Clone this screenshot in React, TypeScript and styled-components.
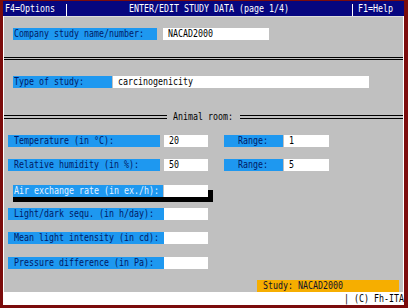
import { createGlobalStyle, styled } from 'styled-components';

const GlobalStyle = createGlobalStyle`
  html, body {
    margin: 0;
    padding: 0;
    background: #7b0c0c;
  }
  body {
    font-family: "DejaVu Sans Mono", "Liberation Mono", monospace;
    font-size: 11px;
  }
`;

// the screen font is a narrow 5px-per-cell terminal font
const CELL_SHRINK = 6.622 - 5;

const Mono = ({ children }: { children: string }) => (
  <SMono $len={children.length}>{children}</SMono>
);

const LabelField = ({
  label,
  value = '',
  labelW,
  inputW,
  gap = 0,
  pad = 6,
}: {
  label: string;
  value?: string;
  labelW: number;
  inputW: number;
  gap?: number;
  pad?: number;
}) => (
  <>
    <SLabel $w={labelW} $pl={pad}>
      <Mono>{label}</Mono>
    </SLabel>
    <SInput $w={inputW} $ml={gap}>
      <Mono>{value}</Mono>
    </SInput>
  </>
);

const RangeField = ({ value }: { value: string }) => (
  <>
    <SLabel $w={59} $ml={16} $center>
      <Mono>Range:</Mono>
    </SLabel>
    <SInput $w={45} $ml={1}>
      <Mono>{value}</Mono>
    </SInput>
  </>
);

const App = () => {
  return (
    <SScreen>
      <GlobalStyle />
      <SInner>
        <STitleBar>
          <STitleCell $w={63} $pl={2}>
            <Mono>F4=Options</Mono>
          </STitleCell>
          <STitleSep />
          <STitleCell $grow $center>
            <Mono>ENTER/EDIT STUDY DATA (page 1/4)</Mono>
          </STitleCell>
          <STitleSep />
          <STitleCell $w={51} $pl={5}>
            <Mono>F1=Help</Mono>
          </STitleCell>
        </STitleBar>

        <SPanel>
          <SRow $mt={11} $pl={9}>
            <LabelField label="Company study name/number:" value="NACAD2000" labelW={144} inputW={106} gap={6} pad={1} />
          </SRow>

          <SDoubleRule $gap={1} $mt={17} />

          <SRow $mt={16} $pl={9}>
            <LabelField label="Type of study:" value="carcinogenicity" labelW={99} inputW={256} gap={1} pad={1} />
          </SRow>

          <SHeading $mt={23}>
            <SDoubleRule $gap={2} $grow />
            <SHeadingText>
              <Mono>Animal room:</Mono>
            </SHeadingText>
            <SDoubleRule $gap={2} $grow />
          </SHeading>

          <SRow $mt={12} $pl={4}>
            <LabelField label="Temperature (in °C):" value="20" labelW={152} inputW={44} gap={4} />
            <RangeField value="1" />
          </SRow>

          <SRow $mt={12} $pl={4}>
            <LabelField label="Relative humidity (in %):" value="50" labelW={152} inputW={44} gap={4} />
            <RangeField value="5" />
          </SRow>

          <SRow $mt={14} $pl={4}>
            <SFocusGroup>
              <SLabel $w={150} $pl={1} $ml={5} $focus>
                <Mono>Air exchange rate (in ex./h):</Mono>
              </SLabel>
              <SInput $w={44} $ml={1} />
            </SFocusGroup>
          </SRow>

          <SRow $mt={11} $pl={4}>
            <LabelField label="Light/dark sequ. (in h/day):" labelW={156} inputW={44} />
          </SRow>

          <SRow $mt={12} $pl={4}>
            <LabelField label="Mean light intensity (in cd):" labelW={156} inputW={44} />
          </SRow>

          <SRow $mt={13} $pl={4}>
            <LabelField label="Pressure difference (in Pa):" labelW={156} inputW={44} />
          </SRow>

          <SStudyBar>
            <Mono>Study: NACAD2000</Mono>
          </SStudyBar>
        </SPanel>

        <SStatus>
          <Mono>| (C) Fh-ITA</Mono>
        </SStatus>
      </SInner>
    </SScreen>
  );
};

const SMono = styled.span<{ $len: number }>`
  display: inline-block;
  white-space: pre;
  transform: scaleX(0.755);
  transform-origin: left center;
  margin-right: ${props => -props.$len * CELL_SHRINK}px;
`;

const SScreen = styled.div`
  width: 408px;
  height: 308px;
  box-sizing: border-box;
  padding: 1px 4px 3px 3px;
  background: #7b0c0c;
  display: flex;
  flex-direction: column;
`;

const SInner = styled.div`
  flex: 1;
  display: flex;
  flex-direction: column;
  background: #ffffff;
`;

const STitleBar = styled.div`
  height: 15px;
  flex-shrink: 0;
  display: flex;
  background: #06067f;
  color: #ffffff;
  line-height: 15px;
`;

const STitleCell = styled.div<{ $w?: number; $pl?: number; $grow?: boolean; $center?: boolean }>`
  box-sizing: border-box;
  width: ${props => (props.$w ? `${props.$w}px` : 'auto')};
  flex: ${props => (props.$grow ? 1 : 'none')};
  padding-left: ${props => props.$pl ?? 0}px;
  display: flex;
  justify-content: ${props => (props.$center ? 'center' : 'flex-start')};
`;

const STitleSep = styled.div`
  width: 1px;
  height: 12px;
  margin-top: 3px;
  background: #ffffff;
`;

const SPanel = styled.div`
  flex: 1;
  margin: 0 1px;
  border-top: 1px solid #dcdcdc;
  background: #c0c0c0;
  display: flex;
  flex-direction: column;
`;

const SRow = styled.div<{ $mt: number; $pl: number }>`
  display: flex;
  height: 12px;
  margin-top: ${props => props.$mt}px;
  padding-left: ${props => props.$pl}px;
  line-height: 12px;
`;

const SLabel = styled.div<{ $w: number; $pl?: number; $ml?: number; $center?: boolean; $focus?: boolean }>`
  box-sizing: border-box;
  width: ${props => props.$w}px;
  margin-left: ${props => props.$ml ?? 0}px;
  padding-left: ${props => props.$pl ?? 0}px;
  background: #1e98f0;
  color: ${props => (props.$focus ? '#e4f2ff' : '#001a66')};
  display: flex;
  justify-content: ${props => (props.$center ? 'center' : 'flex-start')};
  overflow: hidden;
`;

const SInput = styled.div<{ $w: number; $ml?: number }>`
  box-sizing: border-box;
  width: ${props => props.$w}px;
  margin-left: ${props => props.$ml ?? 0}px;
  padding-left: 5px;
  background: #ffffff;
  color: #000000;
`;

const SFocusGroup = styled.div`
  display: flex;
  box-shadow: 5px 5px 0 #000000;
`;

const SDoubleRule = styled.div<{ $gap: number; $mt?: number; $grow?: boolean }>`
  height: ${props => props.$gap}px;
  margin-top: ${props => props.$mt ?? 0}px;
  flex: ${props => (props.$grow ? 1 : 'none')};
  border-top: 1px solid #000000;
  border-bottom: 1px solid #000000;
`;

const SHeading = styled.div<{ $mt: number }>`
  display: flex;
  align-items: center;
  height: 12px;
  margin-top: ${props => props.$mt}px;
  line-height: 12px;
  color: #000000;
`;

const SHeadingText = styled.div`
  margin: 0 6px;
`;

const SStudyBar = styled.div`
  align-self: flex-end;
  box-sizing: border-box;
  width: 142px;
  height: 12px;
  margin: 11px 4px 0 0;
  padding-left: 6px;
  background: #f6ae00;
  color: #10102a;
  line-height: 12px;
`;

const SStatus = styled.div`
  height: 13px;
  flex-shrink: 0;
  display: flex;
  justify-content: flex-end;
  line-height: 13px;
  color: #000000;
`;

export default App;
